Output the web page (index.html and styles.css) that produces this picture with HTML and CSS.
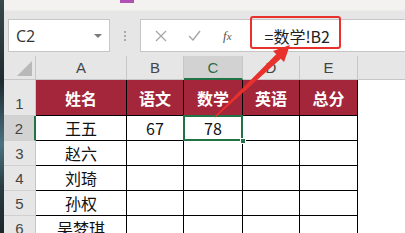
FILE: index.html
```html
<!DOCTYPE html>
<html lang="zh-CN">
<head>
<meta charset="utf-8">
<title>Excel</title>
<link rel="stylesheet" href="styles.css">
</head>
<body>
<div class="app">
  <div class="edge"></div>
  <div class="main">
    <div class="ribbon"><span class="ribbon-mark"></span></div>
    <div class="fbar">
      <div class="namebox"><span class="ref">C2</span><span class="caret"></span></div>
      <div class="grip"><i></i><i></i><i></i></div>
      <div class="formula">
        <svg class="fbtn cancel" width="12" height="12" viewBox="0 0 12 12"><path d="M1 1L11 11M11 1L1 11" stroke="#a6a6a6" stroke-width="1.3" fill="none"/></svg>
        <svg class="fbtn enter" width="13" height="11" viewBox="0 0 13 11"><path d="M1 6L5 10L12 1" stroke="#a6a6a6" stroke-width="1.4" fill="none"/></svg>
        <span class="fx">f<span class="fx-x">x</span></span>
        <span class="ftext">=数学!B2</span>
      </div>
    </div>
    <div class="sheet">
      <div class="corner"><span class="tri"></span></div>
      <div class="ch">A</div>
      <div class="ch">B</div>
      <div class="ch sel">C</div>
      <div class="ch">D</div>
      <div class="ch">E</div>
      <div class="ch rest"></div>

      <div class="rh tall">1</div>
      <div class="hd">姓名</div>
      <div class="hd">语文</div>
      <div class="hd">数学</div>
      <div class="hd">英语</div>
      <div class="hd">总分</div>
      <div class="x"></div>

      <div class="rh sel">2</div>
      <div class="c">王五</div>
      <div class="c">67</div>
      <div class="c active">78<span class="handle"></span></div>
      <div class="c"></div>
      <div class="c"></div>
      <div class="x"></div>

      <div class="rh">3</div>
      <div class="c">赵六</div>
      <div class="c"></div>
      <div class="c"></div>
      <div class="c"></div>
      <div class="c"></div>
      <div class="x"></div>

      <div class="rh">4</div>
      <div class="c">刘琦</div>
      <div class="c"></div>
      <div class="c"></div>
      <div class="c"></div>
      <div class="c"></div>
      <div class="x"></div>

      <div class="rh">5</div>
      <div class="c">孙权</div>
      <div class="c"></div>
      <div class="c"></div>
      <div class="c"></div>
      <div class="c"></div>
      <div class="x"></div>

      <div class="rh">6</div>
      <div class="c">吴梦琪</div>
      <div class="c"></div>
      <div class="c"></div>
      <div class="c"></div>
      <div class="c"></div>
      <div class="x"></div>
    </div>
  </div>
</div>
<div class="callout"></div>
<svg class="arrow" width="405" height="233" viewBox="0 0 405 233">
  <polygon points="214.6,116.6 215.4,117.4 281,58.5 276.5,54" fill="#e8302c"/>
  <polygon points="290,45 284,62 273,51" fill="#e8302c"/>
</svg>
</body>
</html>
```

FILE: styles.css
```css
* { box-sizing: border-box; }

body {
  margin: 0;
  width: 405px;
  height: 233px;
  overflow: hidden;
  position: relative;
  background: #e6e6e6;
  font-family: "Noto Sans CJK SC", "Noto Sans", sans-serif;
}

.app {
  display: flex;
  height: 233px;
}

.edge {
  flex: none;
  width: 4px;
  background: linear-gradient(#3a4a4c, #1e2b30 35%, #4a7280 62%, #2a3c42 80%, #1b262a);
}

.main {
  flex: 1;
  min-width: 0;
  display: flex;
  flex-direction: column;
}

.ribbon {
  flex: none;
  height: 13px;
  display: flex;
  background: linear-gradient(#f3f2f1 0, #f3f2f1 9px, #e2e2e2 13px);
}

.ribbon-mark {
  margin-left: 116px;
  width: 14px;
  height: 3px;
  background: #b050b4;
}

.fbar {
  flex: none;
  height: 43px;
  display: flex;
  align-items: flex-start;
  padding-top: 6px;
  background: #e6e6e6;
}

.namebox {
  margin-left: 4px;
  width: 102px;
  height: 33px;
  display: flex;
  align-items: center;
  padding-left: 7px;
  background: #fff;
  border: 1px solid #c6c6c6;
}

.ref {
  font-family: "Open Sans", "Noto Sans", sans-serif;
  font-size: 16px;
  color: #333;
}

.caret {
  margin-left: auto;
  margin-right: 7px;
  width: 0;
  height: 0;
  border-top: 4px solid #7a7a7a;
  border-left: 4px solid transparent;
  border-right: 4px solid transparent;
}

.grip {
  width: 30px;
  height: 33px;
  display: flex;
  flex-direction: column;
  align-items: center;
  justify-content: center;
  gap: 2px;
}

.grip i {
  width: 2px;
  height: 2px;
  background: #a8a8a8;
}

.formula {
  flex: 1;
  height: 33px;
  display: flex;
  align-items: center;
  background: #fff;
  border: 1px solid #c6c6c6;
  border-right: none;
}

.fbtn { flex: none; }
.cancel { margin-left: 14px; }
.enter { margin-left: 21px; }

.fx {
  margin-left: 22px;
  font-family: "Liberation Serif", serif;
  font-style: italic;
  font-size: 13px;
  color: #555;
}

.fx-x { font-size: 11px; }

.ftext {
  margin-left: 33px;
  font-size: 16px;
  color: #222;
}

.sheet {
  flex: none;
  display: grid;
  grid-template-columns: 32px 91px 57px 59px 57px 58px 1fr;
  grid-template-rows: 24px 36px repeat(5, 25px);
}

.corner {
  position: relative;
  background: #e6e6e6;
  border-right: 1px solid #c6c6c6;
  border-bottom: 1px solid #c6c6c6;
}

.tri {
  position: absolute;
  right: 3px;
  bottom: 3px;
  width: 15px;
  height: 15px;
  background: #b8b8b8;
  clip-path: polygon(100% 0, 100% 100%, 0 100%);
}

.ch {
  display: flex;
  align-items: center;
  justify-content: center;
  background: #e6e6e6;
  border-right: 1px solid #c6c6c6;
  border-bottom: 1px solid #c6c6c6;
  font-family: "Liberation Sans", sans-serif;
  font-size: 15px;
  color: #444;
}

.ch.sel {
  background: #d2d2d2;
  color: #2e6b48;
  border-bottom: 2px solid #217346;
}

.ch.rest { border-right: none; }

.rh {
  display: flex;
  align-items: center;
  justify-content: center;
  background: #e6e6e6;
  border-right: 1px solid #c6c6c6;
  border-bottom: 1px solid #d0d0d0;
  font-family: "Liberation Sans", sans-serif;
  font-size: 15px;
  color: #444;
}

.rh.tall {
  align-items: flex-end;
  padding-bottom: 3px;
}

.rh.sel {
  background: #d2d2d2;
  border-right: 2px solid #217346;
}

.hd {
  display: flex;
  align-items: center;
  justify-content: center;
  background: #a3263a;
  color: #fff;
  font-weight: bold;
  font-size: 16px;
  border-right: 1px solid #000;
  border-bottom: 1px solid #000;
}

.c {
  display: flex;
  align-items: center;
  justify-content: center;
  background: #fff;
  border-right: 1px solid #000;
  border-bottom: 1px solid #000;
  font-size: 16px;
  color: #111;
}

.c.active { position: relative; }

.c.active::after {
  content: "";
  position: absolute;
  top: -1px;
  left: -1px;
  right: -1px;
  bottom: -1px;
  border: 2px solid #217346;
}

.handle {
  position: absolute;
  right: -4px;
  bottom: -4px;
  width: 6px;
  height: 6px;
  background: #217346;
  border: 1px solid #fff;
  z-index: 1;
}

.x {
  background: #fff;
}

.callout {
  position: absolute;
  left: 250px;
  top: 16px;
  width: 91px;
  height: 33px;
  border: 2px solid #e8302c;
  border-radius: 3px;
}

.arrow {
  position: absolute;
  left: 0;
  top: 0;
  pointer-events: none;
}
```
